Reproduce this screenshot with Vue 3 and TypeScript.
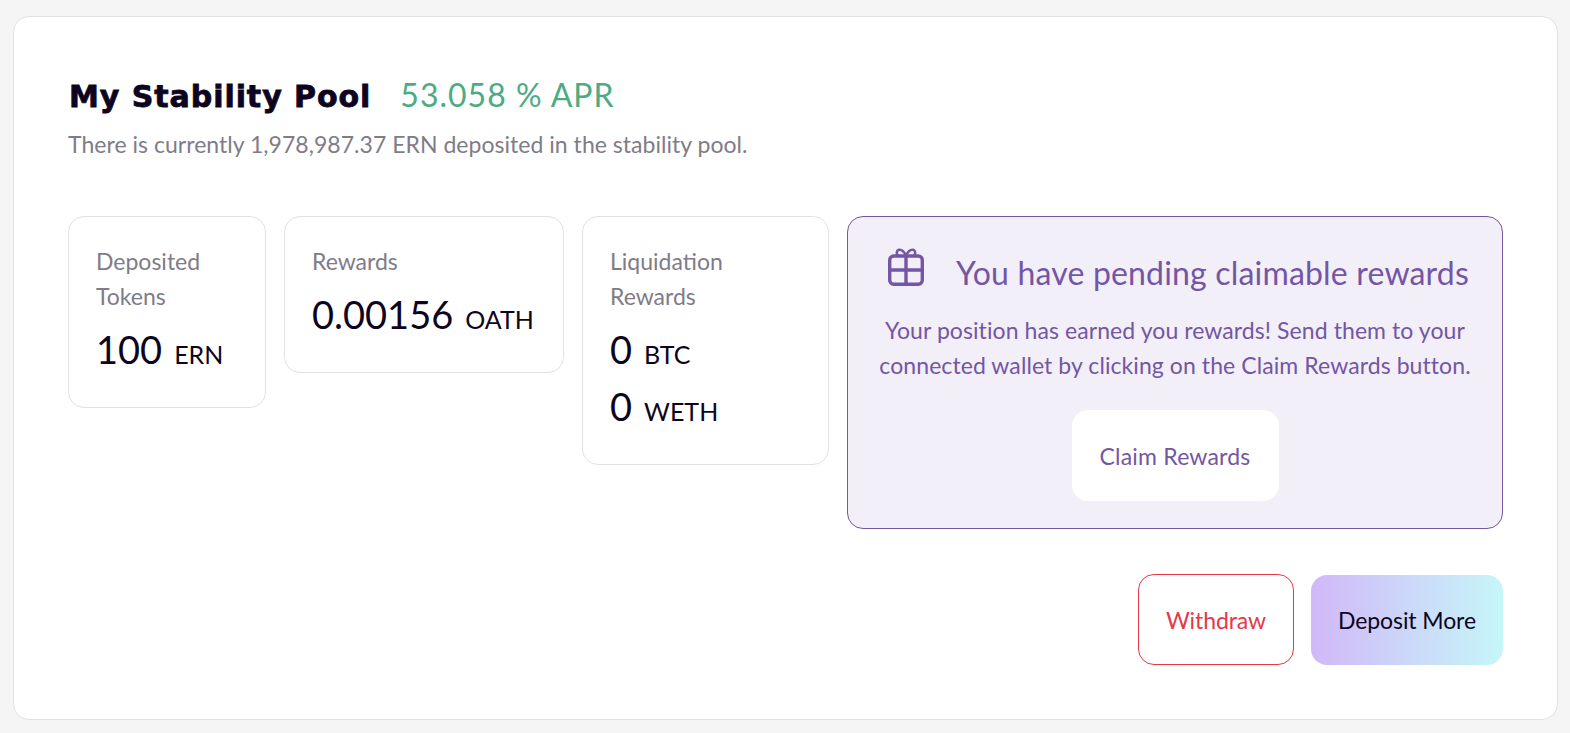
<script setup lang="ts">
interface Amount { value: string; unit: string }
interface Stat { label: string; cls: string; amounts: Amount[] }
const stats: Stat[] = [
  { label: 'Deposited Tokens', cls: 'w1', amounts: [{ value: '100', unit: 'ERN' }] },
  { label: 'Rewards', cls: 'w2', amounts: [{ value: '0.00156', unit: 'OATH' }] },
  { label: 'Liquidation Rewards', cls: 'w3', amounts: [{ value: '0', unit: 'BTC' }, { value: '0', unit: 'WETH' }] },
]
</script>

<template>
  <main class="page">
    <section class="card">
      <header class="head">
        <div class="title-row">
          <h1 class="title">My Stability Pool</h1>
          <span class="apr">53.058 % APR</span>
        </div>
        <p class="sub">There is currently 1,978,987.37 ERN deposited in the stability pool.</p>
      </header>

      <div class="row">
        <div v-for="s in stats" :key="s.label" class="stat" :class="s.cls">
          <div class="label">{{ s.label }}</div>
          <div class="amounts">
            <div v-for="a in s.amounts" :key="a.unit" class="amount">
              <span class="value">{{ a.value }}</span>
              <span class="unit">{{ a.unit }}</span>
            </div>
          </div>
        </div>

        <div class="claim">
          <div class="claim-head">
            <svg class="gift" viewBox="0 0 36 38" width="36" height="38" fill="none" stroke="#7356a4" stroke-width="3.4" stroke-linejoin="round" stroke-linecap="round">
              <rect x="1.700" y="8" width="32.600" height="28.300" rx="4" />
              <path d="M1.700 22h32.600M18 8v28.300" />
              <path d="M18 7.500C16 3.500 13 1.400 10.800 1.800 8.600 2.400 8.200 5.400 9.800 7.500M18 7.500C20 3.500 23 1.400 25.200 1.800 27.400 2.400 27.800 5.400 26.200 7.500" stroke-width="2.600" />
            </svg>
            <span class="claim-title">You have pending claimable rewards</span>
          </div>
          <p class="claim-text">Your position has earned you rewards! Send them to your connected wallet by clicking on the Claim Rewards button.</p>
          <button class="btn claim-btn" type="button">Claim Rewards</button>
        </div>
      </div>

      <div class="actions">
        <button class="btn withdraw" type="button">Withdraw</button>
        <button class="btn deposit" type="button">Deposit More</button>
      </div>
    </section>
  </main>
</template>

<style>
html, body { margin: 0; background: #f5f5f5; }
</style>

<style scoped>
.page {
  box-sizing: border-box;
  height: 733px;
  padding: 16px 12px 13px 13px;
  background: #f5f5f5;
  font-family: Lato, "Open Sans", sans-serif;
  color: #0d0520;
}
.card {
  box-sizing: border-box;
  height: 704px;
  padding: 56px 54px 0 54px;
  background: #fff;
  border: 1px solid #e2e2e4;
  border-radius: 16px;
}
.title-row { display: flex; align-items: center; gap: 29px; height: 46px; }
.title {
  margin: 0 0 0 1px;
  font-family: "DejaVu Sans", sans-serif;
  font-size: 30px;
  font-weight: 700;
  letter-spacing: 0.95px;
  -webkit-text-stroke: 0.8px #0d0520;
  color: #0d0520;
  white-space: nowrap;
}
.apr { margin-bottom: 3px; font-size: 32px; color: #4dab83; white-space: nowrap; letter-spacing: 1px; }
.sub { margin: 8px 0 0; font-size: 23px; line-height: 35px; color: #7f7c88; white-space: nowrap; letter-spacing: 0.03px; }
.row { display: flex; align-items: flex-start; gap: 18px; margin-top: 54px; }
.stat {
  flex: none;
  box-sizing: border-box;
  padding: 27px 27px 0;
  background: #fff;
  border: 1px solid #e2e2e4;
  border-radius: 16px;
}
.w1 { width: 198px; height: 192px; }
.w2 { width: 280px; height: 157px; }
.w3 { width: 247px; height: 249px; }
.label { font-size: 23px; line-height: 35px; color: #7f7c88; }
.amounts { display: flex; flex-direction: column; gap: 3px; margin-top: 8px; }
.amount { display: flex; align-items: baseline; gap: 12px; height: 54px; line-height: 54px; white-space: nowrap; }
.value { font-size: 38px; color: #0d0520; }
.unit { font-size: 25px; color: #0d0520; }
.claim {
  flex: none;
  box-sizing: border-box;
  width: 656px;
  height: 313px;
  padding: 27px 20px 0;
  display: flex;
  flex-direction: column;
  align-items: center;
  background: #f2eff9;
  border: 1px solid #7356a4;
  border-radius: 16px;
  color: #7356a4;
}
.claim-head { display: flex; align-items: center; gap: 32px; height: 56px; margin-left: 7px; }
.gift { flex: none; margin-top: -10px; }
.claim-title { font-size: 32px; white-space: nowrap; letter-spacing: 0.18px; }
.claim-text { margin: 13px 0 0; font-size: 23px; line-height: 35px; text-align: center; letter-spacing: 0.08px; }
.btn {
  box-sizing: border-box;
  height: 90px;
  border: 0;
  border-radius: 16px;
  font-family: inherit;
  font-size: 23px;
  white-space: nowrap;
  cursor: pointer;
}
.claim-btn { width: 207px; height: 91px; margin-top: 27px; background: #fff; color: #7356a4; letter-spacing: 0.2px; }
.actions { display: flex; justify-content: flex-end; align-items: center; gap: 17px; margin-top: 45px; }
.withdraw { width: 156px; height: 91px; background: #fff; border: 1px solid #e5384a; color: #e5384a; letter-spacing: -0.1px; }
.deposit { width: 192px; background: linear-gradient(90deg, #d1b8f8 0%, #c6f6f8 100%); color: #0d0520; letter-spacing: -0.1px; }
</style>
